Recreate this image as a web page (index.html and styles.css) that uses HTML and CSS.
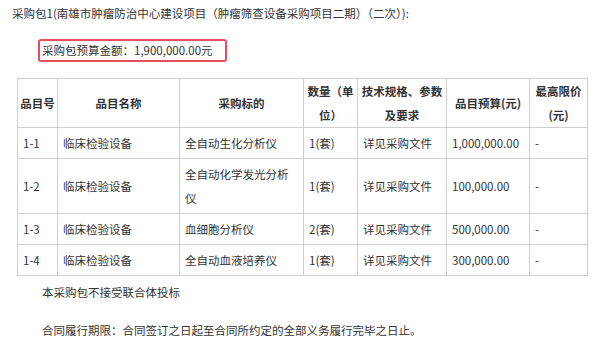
FILE: index.html
```html
<!DOCTYPE html>
<html lang="zh-CN">
<head>
<meta charset="utf-8">
<link rel="stylesheet" href="styles.css">
</head>
<body>
<div class="page">
  <p class="title">采购包1(南雄市肿瘤防治中心建设项目（肿瘤筛查设备采购项目二期）（二次）):</p>
  <div class="budget"><span class="box">采购包预算金额：1,900,000.00元</span></div>
  <table class="items">
    <colgroup>
      <col class="c1"><col class="c2"><col class="c3"><col class="c4"><col class="c5"><col class="c6"><col class="c7">
    </colgroup>
    <thead>
      <tr>
        <th>品目号</th>
        <th>品目名称</th>
        <th>采购标的</th>
        <th>数量（单位）</th>
        <th>技术规格、参数及要求</th>
        <th>品目预算(元)</th>
        <th>最高限价(元)</th>
      </tr>
    </thead>
    <tbody>
      <tr><td>1-1</td><td>临床检验设备</td><td>全自动生化分析仪</td><td>1(套)</td><td>详见采购文件</td><td>1,000,000.00</td><td>-</td></tr>
      <tr><td>1-2</td><td>临床检验设备</td><td>全自动化学发光分析仪</td><td>1(套)</td><td>详见采购文件</td><td>100,000.00</td><td>-</td></tr>
      <tr><td>1-3</td><td>临床检验设备</td><td>血细胞分析仪</td><td>2(套)</td><td>详见采购文件</td><td>500,000.00</td><td>-</td></tr>
      <tr><td>1-4</td><td>临床检验设备</td><td>全自动血液培养仪</td><td>1(套)</td><td>详见采购文件</td><td>300,000.00</td><td>-</td></tr>
    </tbody>
  </table>
  <p class="note">本采购包不接受联合体投标</p>
  <p class="note note-gap">合同履行期限：合同签订之日起至合同所约定的全部义务履行完毕之日止。</p>
</div>
</body>
</html>
```

FILE: styles.css
```css
html, body {
  margin: 0;
  padding: 0;
  background: #ffffff;
}

body {
  font-family: "Noto Sans CJK SC", "Noto Sans", sans-serif;
  font-size: 11.5px;
  color: #333333;
}

.page {
  padding: 1px 0 0 12px;
}

.title {
  margin: 0;
  line-height: 24px;
}

.budget {
  display: flex;
  margin-top: 14px;
  padding-left: 26px;
}

.box {
  display: inline-block;
  border: 2px solid #e6505e;
  border-radius: 3px;
  line-height: 19px;
  padding: 0 12px 0 2px;
}

.items {
  margin: 16px 0 0 5px;
  border-collapse: collapse;
  table-layout: fixed;
  width: 570px;
}

.c1 { width: 40px; }
.c2 { width: 122px; }
.c3 { width: 124px; }
.c4 { width: 54px; }
.c5 { width: 89px; }
.c6 { width: 83px; }
.c7 { width: 58px; }

.items th,
.items td {
  border: 1px solid #cfcfcf;
  line-height: 24px;
  vertical-align: middle;
}

.items th {
  font-weight: 700;
  text-align: center;
  padding: 0 2px;
}

.items td {
  text-align: left;
  padding: 3px 4px 3px 5px;
}

.note {
  margin: 4px 0 0 30px;
  line-height: 24px;
}

.note-gap {
  margin-top: 14px;
}
```
